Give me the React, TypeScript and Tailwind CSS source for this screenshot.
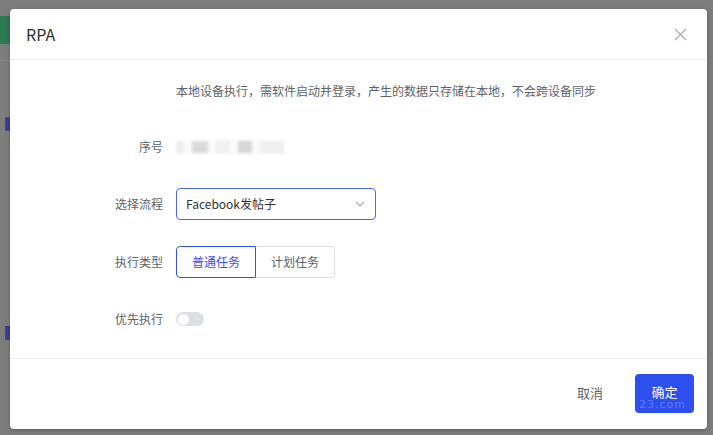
import React from "react";

const font = { fontFamily: '"Noto Sans CJK SC", "Noto Sans", sans-serif' };

const FormRow: React.FC<{ label: string; className?: string; children: React.ReactNode }> = ({ label, className, children }) => (
  <div className={`flex items-center ${className ?? ""}`}>
    <div className="w-[166px] pr-[13px] text-right text-[12px] text-[#606266]">{label}</div>
    {children}
  </div>
);

const App: React.FC = () => {
  return (
    <div className="relative w-[713px] h-[435px] overflow-hidden bg-[#7d7d7d] pl-[10px] pt-[9px]" style={font}>
      {/* page behind the overlay */}
      <div className="absolute left-0 top-0 w-[10px] h-full flex flex-col">
        <div className="h-[16px]" />
        <div className="h-[28px] bg-[#2c7a52]" />
        <div className="h-[16px]" />
        <div className="h-px bg-[#8a8a8a]" />
        <div className="h-[56px]" />
        <div className="ml-[5px] w-[5px] h-[14px] bg-[#3b3f9a]" />
        <div className="h-[195px]" />
        <div className="ml-[5px] w-[5px] h-[14px] bg-[#3b3f9a]" />
      </div>

      <div className="relative flex flex-col w-[697px] h-[420px] bg-white rounded-[4px] shadow-[0_1px_4px_rgba(0,0,0,0.25)]">
        <div className="flex items-center justify-between h-[51px] px-[16px] border-b border-[#ebeef5]">
          <span className="text-[16px] text-[#303133]">RPA</span>
          <svg width="13" height="13" viewBox="0 0 13 13" className="mr-[4px]">
            <path d="M1 1L12 12M12 1L1 12" stroke="#a8abb2" strokeWidth="1.3" />
          </svg>
        </div>

        <div className="flex flex-col flex-1 pt-[22px]">
          <div className="pl-[166px] text-[12px] text-[#606266]">
            本地设备执行，需软件启动并登录，产生的数据只存储在本地，不会跨设备同步
          </div>

          <FormRow label="序号" className="mt-[37px] h-[20px]">
            <div className="flex items-center gap-[8px] w-[109px] h-[16px] bg-[#fafafa] blur-[1.5px]">
              <div className="w-[8px] h-[12px] bg-[#ececec]" />
              <div className="w-[16px] h-[12px] bg-[#dadada]" />
              <div className="w-[14px] h-[12px] bg-[#f0f0f0]" />
              <div className="w-[14px] h-[12px] bg-[#d6d6d6]" />
              <div className="w-[24px] h-[12px] bg-[#efefef]" />
            </div>
          </FormRow>

          <FormRow label="选择流程" className="mt-[31px]">
            <div className="flex items-center justify-between w-[200px] h-[32px] px-[9px] border border-[#4a67e8] rounded-[4px]">
              <span className="text-[12px] text-[#303133]">Facebook发帖子</span>
              <svg width="10" height="6" viewBox="0 0 10 6" className="mr-[1px]">
                <path d="M1 1L5 5L9 1" fill="none" stroke="#a8abb2" strokeWidth="1.2" />
              </svg>
            </div>
          </FormRow>

          <FormRow label="执行类型" className="mt-[26px]">
            <div className="flex h-[32px]">
              <div className="flex items-center justify-center w-[80px] border border-[#3451e6] rounded-l-[4px] text-[12px] text-[#3451e6]">
                普通任务
              </div>
              <div className="flex items-center justify-center w-[79px] border border-l-0 border-[#dcdfe6] rounded-r-[4px] text-[12px] text-[#606266]">
                计划任务
              </div>
            </div>
          </FormRow>

          <FormRow label="优先执行" className="mt-[32px]">
            <div className="flex items-center w-[28px] h-[14px] rounded-full bg-[#dcdfe6] px-[2px]">
              <div className="w-[11px] h-[11px] rounded-full bg-white" />
            </div>
          </FormRow>
        </div>

        <div className="flex items-center justify-end h-[71px] pr-[13px] pb-[2px] border-t border-[#ebeef5]">
          <span className="mr-[32px] text-[13px] text-[#606266]">取消</span>
          <div className="relative flex items-center justify-center w-[59px] h-[39px] rounded-[4px] bg-[#2e4ff0] text-[13px] text-white">
            <span className="-mt-[2px]">确定</span>
            <span className="absolute left-[4px] bottom-[1px] text-[11px] leading-[14px] text-white/25 tracking-[1px]" style={{ fontFamily: '"DejaVu Sans", sans-serif' }}>
              23.com
            </span>
          </div>
        </div>
      </div>
    </div>
  );
};

export default App;
